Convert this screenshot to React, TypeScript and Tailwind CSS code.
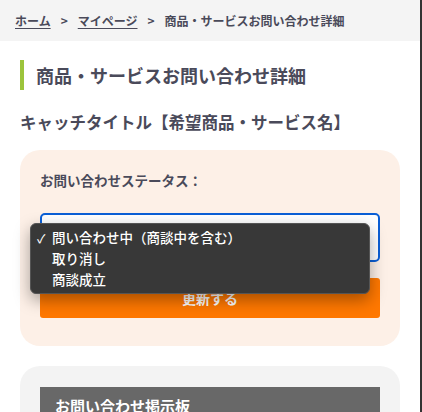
export default function App() {
  const font = { fontFamily: '"Noto Sans CJK JP", "Noto Sans", sans-serif' };

  return (
    <div className="w-[422px] h-[412px] overflow-hidden bg-white border-r-2 border-[#333333]" style={font}>
      {/* Breadcrumb */}
      <div className="h-[41px] bg-[#f4f4f4] px-[15px] flex items-center text-[12px] font-bold text-[#4a4a5a]">
        <a className="underline underline-offset-2">ホーム</a>
        <span className="mx-[10px]">&gt;</span>
        <a className="underline underline-offset-2">マイページ</a>
        <span className="mx-[10px]">&gt;</span>
        <span>商品・サービスお問い合わせ詳細</span>
      </div>

      <div className="px-5">
        {/* Page title */}
        <h1 className="mt-[19px] border-l-[4px] border-[#9cc43c] pl-3 text-[18px] leading-[30px] font-bold text-[#4a4a5a]">
          商品・サービスお問い合わせ詳細
        </h1>

        <h2 className="mt-[20px] text-[16.5px] leading-[24px] font-bold text-[#4a4a5a]">
          キャッチタイトル【希望商品・サービス名】
        </h2>

        {/* Status card */}
        <div className="relative mt-[16px] rounded-[20px] bg-[#fdf0e7] px-5 pt-5 pb-[28px]">
          <p className="text-[13.5px] leading-[20px] font-bold text-[#4a4a5a]">お問い合わせステータス：</p>
          <div className="mt-[23px] h-[49px] rounded-[5px] border-2 border-[#0a5fd6] bg-white" />
          <button className="mt-[16px] w-full h-[40px] rounded-[3px] bg-[#ff7800] text-white text-[14px] font-bold">
            更新する
          </button>

          {/* Open select menu */}
          <div className="absolute left-[10px] top-[73px] w-[340px] h-[71px] rounded-[6px] border border-[#555555] bg-[#383838] pt-[3px] shadow-[0_6px_16px_rgba(0,0,0,0.35)] text-[13.5px] leading-[21px] font-medium text-white">
            <div className="flex items-center">
              <span className="w-[21px] pl-[6px] text-[12px]">✓</span>
              <span>問い合わせ中（商談中を含む）</span>
            </div>
            <div className="pl-[21px]">取り消し</div>
            <div className="pl-[21px]">商談成立</div>
          </div>
        </div>

        {/* Message board */}
        <div className="mt-[20px] rounded-[20px] bg-[#f3f3f3] px-5 pt-[21px] pb-5">
          <div className="h-[60px] bg-[#686868] px-[15px] pt-[8px] text-[15px] leading-[22px] font-bold text-white">
            お問い合わせ掲示板
          </div>
        </div>
      </div>
    </div>
  );
}
